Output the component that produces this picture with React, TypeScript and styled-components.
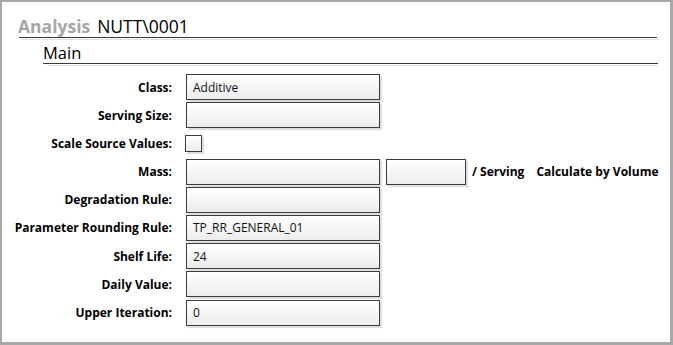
import React from 'react';
import styled, { createGlobalStyle } from 'styled-components';

const GlobalStyle = createGlobalStyle`
  html, body {
    margin: 0;
    padding: 0;
    background: #ffffff;
  }
  body {
    font-family: "Open Sans", "Liberation Sans", sans-serif;
  }
`;

const Page = styled.div`
  box-sizing: border-box;
  width: 673px;
  height: 345px;
  border-style: solid;
  border-color: #a8a8a8;
  border-width: 2px 3px 3px 2px;
  padding: 0 13px 0 16px;
  background: #fff;
`;

const TitleBar = styled.div`
  position: relative;
  display: flex;
  align-items: flex-end;
  gap: 7px;
  height: 35px;
  margin-left: 1px;
  border-bottom: 1px solid #3a3a3a;
  font-size: 17.5px;
  line-height: 21px;

  &::after {
    content: '';
    position: absolute;
    left: 2px;
    right: -2px;
    bottom: -3px;
    height: 1px;
    background: #e2e2e2;
  }
`;

const TitleKind = styled.span`
  color: #a6a6a6;
  font-weight: 700;
  margin-left: -1px;
`;

const TitleName = styled.span`
  color: #000;
`;

const Section = styled.div`
  margin-left: 25px;
  margin-right: -1px;
`;

const SectionHeader = styled.div`
  position: relative;
  display: flex;
  align-items: flex-end;
  height: 25px;
  border-bottom: 1px solid #3a3a3a;
  font-size: 16.5px;
  line-height: 20px;
  color: #000;

  &::after {
    content: '';
    position: absolute;
    left: 4px;
    right: -1px;
    bottom: -3px;
    height: 1px;
    background: #e2e2e2;
  }
`;

const Form = styled.div`
  display: grid;
  grid-template-columns: 154px auto;
  grid-auto-rows: 26px;
  column-gap: 14px;
  row-gap: 2.2px;
  margin-top: 10px;
`;

const Label = styled.div`
  justify-self: end;
  align-self: center;
  margin-right: 0;
  white-space: nowrap;
  font-size: 12px;
  font-weight: 700;
  color: #000;
`;

const Field = styled.div`
  display: flex;
  align-items: center;
  gap: 6px;
`;

const Input = styled.div<{ $w?: number }>`
  box-sizing: border-box;
  width: ${p => p.$w ?? 194}px;
  height: 26px;
  padding: 0 6px;
  display: flex;
  align-items: center;
  border: 1px solid #3c3c3c;
  background: linear-gradient(#ffffff, #ececec);
  box-shadow: 2px 2px 1px #dedede;
  font-size: 12px;
  color: #111;
`;

const Check = styled.div`
  box-sizing: border-box;
  width: 17px;
  height: 17px;
  margin-left: -1px;
  border: 1px solid #3c3c3c;
  background: linear-gradient(#ffffff, #ececec);
  box-shadow: 2px 2px 1px #dedede;
`;

const Unit = styled.span<{ $gap?: number }>`
  margin-left: ${p => p.$gap ?? 0}px;
  font-size: 12px;
  font-weight: 700;
  white-space: nowrap;
`;

const rows: { label: string; value?: string }[] = [
  { label: 'Degradation Rule:' },
  { label: 'Parameter Rounding Rule:', value: 'TP_RR_GENERAL_01' },
  { label: 'Shelf Life:', value: '24' },
  { label: 'Daily Value:' },
  { label: 'Upper Iteration:', value: '0' },
];

export default function App() {
  return (
    <>
      <GlobalStyle />
      <Page>
        <TitleBar>
          <TitleKind>Analysis</TitleKind>
          <TitleName>NUTT\0001</TitleName>
        </TitleBar>
        <Section>
          <SectionHeader>Main</SectionHeader>
        </Section>
        <Form>
          <Label>Class:</Label>
          <Field>
            <Input>Additive</Input>
          </Field>
          <Label>Serving Size:</Label>
          <Field>
            <Input />
          </Field>
          <Label>Scale Source Values:</Label>
          <Field>
            <Check />
          </Field>
          <Label>Mass:</Label>
          <Field>
            <Input />
            <Input $w={80} />
            <Unit>/ Serving</Unit>
            <Unit $gap={6}>Calculate by Volume</Unit>
          </Field>
          {rows.map(r => (
            <React.Fragment key={r.label}>
              <Label>{r.label}</Label>
              <Field>
                <Input>{r.value}</Input>
              </Field>
            </React.Fragment>
          ))}
        </Form>
      </Page>
    </>
  );
}
